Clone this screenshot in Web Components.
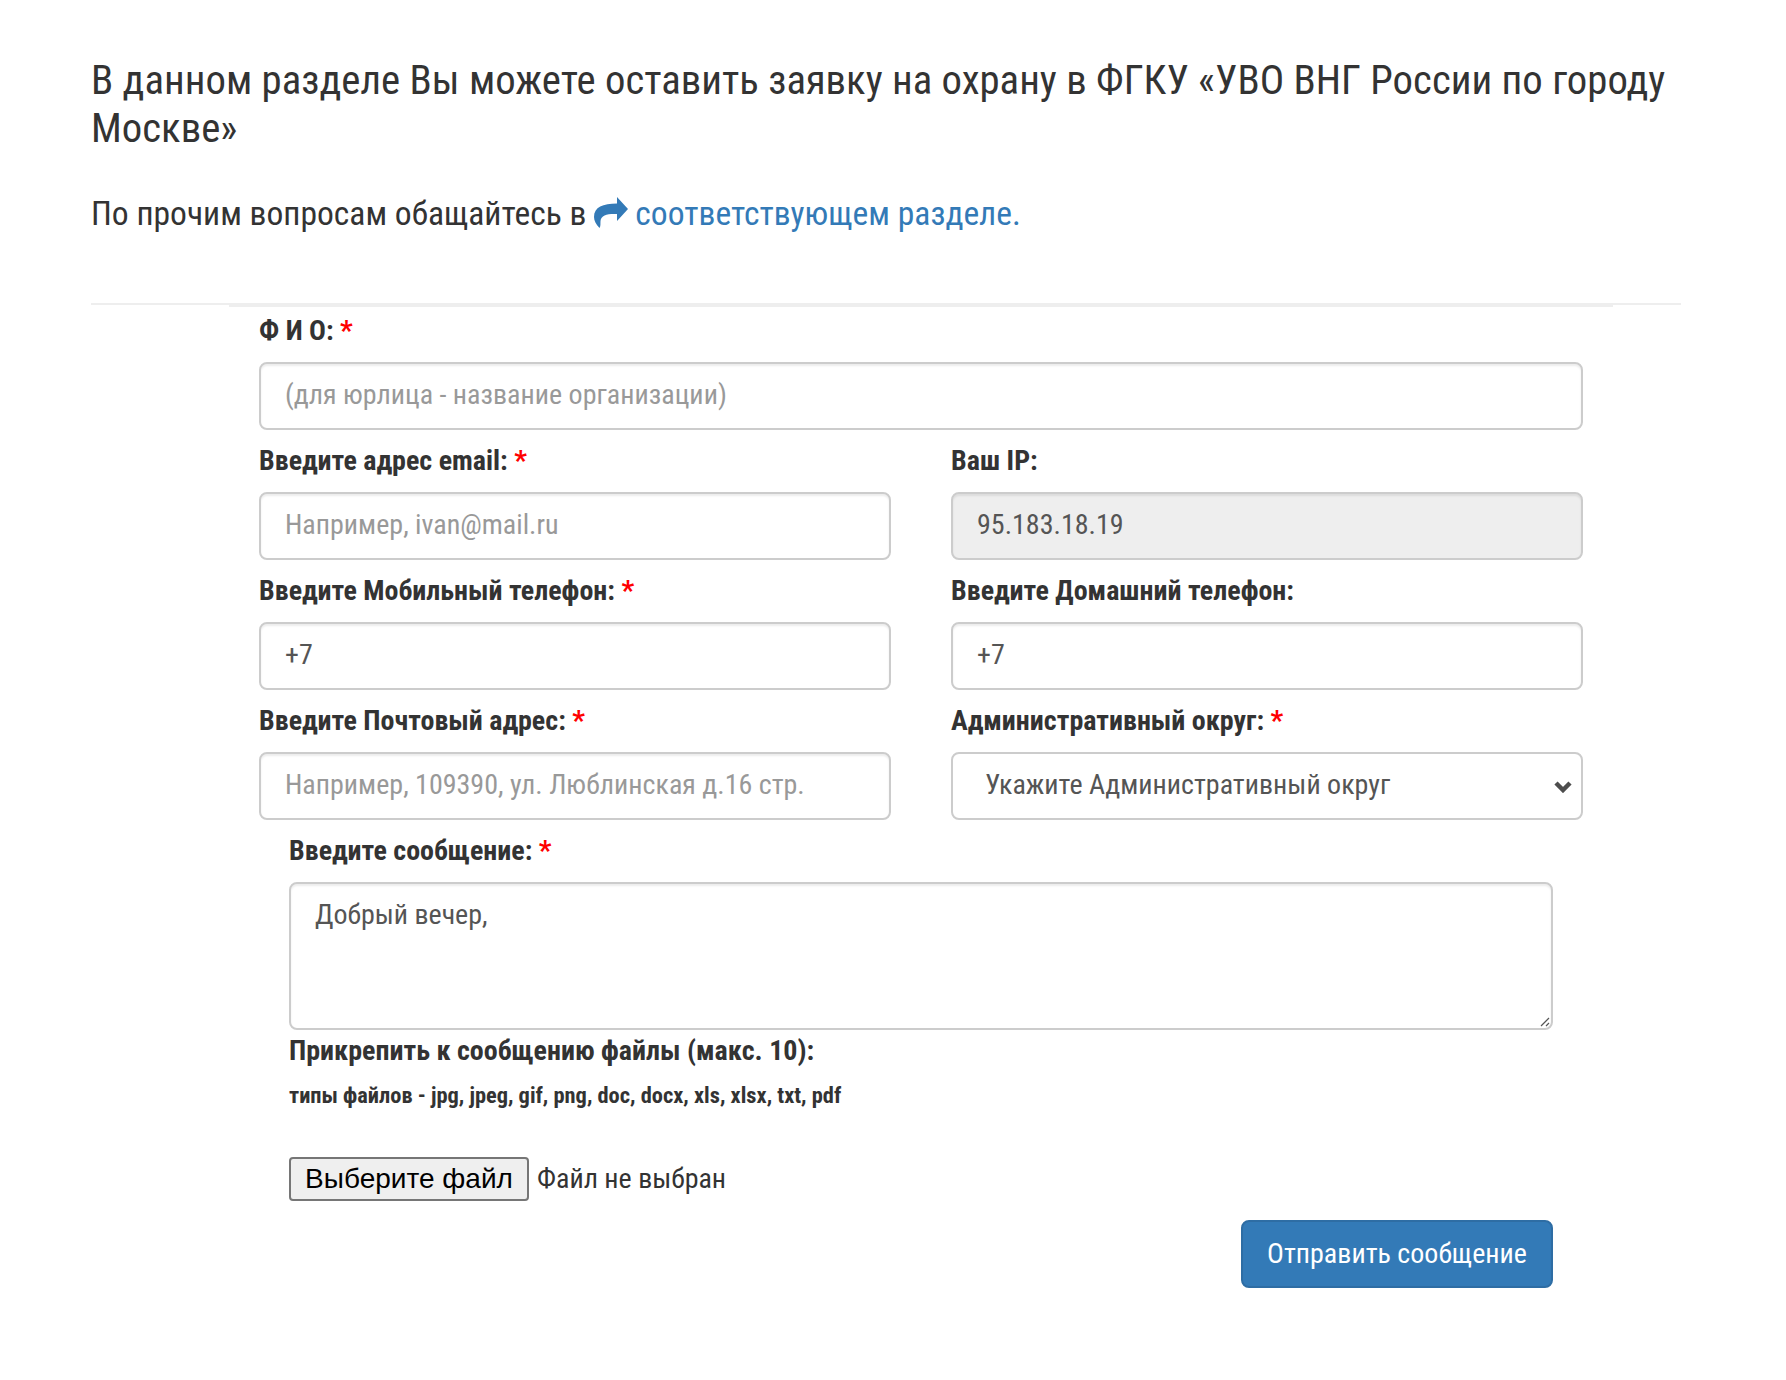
<!DOCTYPE html>
<html lang="ru">
<head>
<meta charset="utf-8">
<title>Заявка на охрану</title>
<style>
  html, body { margin: 0; background: #fff; }
  body { font-family: Roboto, "Liberation Sans", sans-serif; color: #333; }
</style>
</head>
<body>
<request-page>
  <page-intro>
    <span slot="title">В данном разделе Вы можете оставить заявку на охрану в ФГКУ «УВО ВНГ России по городу Москве»</span>
    <span slot="before">По прочим вопросам обащайтесь в</span>
    <span slot="link">соответствующем разделе.</span>
  </page-intro>
  <request-form></request-form>
</request-page>

<script>
class RequestPage extends HTMLElement {
  connectedCallback() {
    this.attachShadow({ mode: 'open' });
    this.shadowRoot.innerHTML = `
      <style>
        :host { display: block; padding: 56px 105px 0 91px; }
      </style>
      <slot></slot>
    `;
  }
}
customElements.define('request-page', RequestPage);

class PageIntro extends HTMLElement {
  connectedCallback() {
    this.attachShadow({ mode: 'open' });
    this.shadowRoot.innerHTML = `
      <style>
        :host { display: block; border-bottom: 2px solid #eee; padding-bottom: 66px; }
        h3 {
          margin: 0 0 39px;
          font: 400 condensed 40.75px/48px Roboto, sans-serif;
          color: #333;
        }
        p {
          margin: 0;
          font: 400 condensed 33.6px/46px Roboto, sans-serif;
          color: #333;
          display: flex;
          align-items: center;
          gap: 8px;
        }
        a { color: #337ab7; text-decoration: none; display: inline-flex; align-items: center; gap: 7px; }
        svg { width: 34px; height: 31px; fill: #337ab7; margin-top: -4px; }
      </style>
      <h3><slot name="title"></slot></h3>
      <p>
        <slot name="before"></slot>
        <a href="#">
          <svg viewBox="0 0 34 31"><path d="M23 0L34 12 23 24V17C14 16.500 7 18 6.500 24 6.300 27 6.800 29 5.500 31 2 27 0 24 0 20 0 10 9 6.500 23 6.500Z"/></svg>
          <slot name="link"></slot>
        </a>
      </p>
    `;
  }
}
customElements.define('page-intro', PageIntro);

class FormField extends HTMLElement {
  connectedCallback() {
    const required = this.hasAttribute('required');
    const kind = this.getAttribute('kind') || 'input';
    const label = this.getAttribute('label');
    const text = this.getAttribute('text') || '';
    this.attachShadow({ mode: 'open' });
    this.shadowRoot.innerHTML = `
      <style>
        :host { display: block; min-width: 0; }
        label {
          display: block;
          box-sizing: border-box;
          height: 41px;
          padding-top: 1px;
          margin-bottom: 11px;
          font: 700 condensed 28px/40px Roboto, sans-serif;
          color: #333;
        }
        label i { color: #f00; font-style: normal; }
        .box {
          box-sizing: border-box;
          height: 68px;
          display: flex;
          align-items: center;
          justify-content: space-between;
          padding: 0 24px 2px;
          border: 2px solid #ccc;
          border-radius: 8px;
          background: #fff;
          box-shadow: inset 0 2px 2px rgba(0, 0, 0, .075);
          font: 400 condensed 28px/40px Roboto, sans-serif;
          color: #555;
          white-space: nowrap;
        }
        :host([placeholder]) .box { color: #999; }
        :host([disabled]) .box { background: #eee; }
        :host([kind=select]) .box { padding: 0 9px 2px 32px; box-shadow: none; }
        :host([kind=area]) .box {
          position: relative;
          height: 148px;
          align-items: flex-start;
          padding-top: 11px;
        }
        .grip { position: absolute; right: 1px; bottom: 1px; width: 10px; height: 10px; }
        .chev { width: 18px; height: 13px; margin-top: 2px; }
      </style>
      <label>${label}${required ? ' <i>*</i>' : ''}</label>
      <div class="box">
        <span>${text}</span>
        ${kind === 'select' ? '<svg class="chev" viewBox="0 0 18 13"><path d="M2 3l7 7 7-7" fill="none" stroke="#4d4d4d" stroke-width="4.500"/></svg>' : ''}
        ${kind === 'area' ? '<svg class="grip" viewBox="0 0 10 10"><path d="M1 9l8-8M6 9l3-3" stroke="#555" stroke-width="1.200"/></svg>' : ''}
      </div>
    `;
  }
}
customElements.define('form-field', FormField);

class FileUpload extends HTMLElement {
  connectedCallback() {
    this.attachShadow({ mode: 'open' });
    this.shadowRoot.innerHTML = `
      <style>
        :host { display: block; padding-top: 1px; }
        h4 { margin: 0; font: 700 condensed 28px/40px Roboto, sans-serif; color: #333; }
        small { display: block; margin-top: 4px; font: 700 condensed 22.400px/40px Roboto, sans-serif; color: #333; }
        .row { display: flex; align-items: center; gap: 8px; margin-top: 42px; }
        button {
          box-sizing: border-box;
          width: 240px;
          height: 44px;
          padding: 0;
          background: #efefef;
          border: 2px solid #767676;
          border-radius: 4px;
          font: 400 28px/40px "Liberation Sans", sans-serif;
          color: #000;
        }
        span { font: 400 condensed 28px/40px Roboto, sans-serif; color: #333; }
      </style>
      <h4>Прикрепить к сообщению файлы (макс. 10):</h4>
      <small>типы файлов - jpg, jpeg, gif, png, doc, docx, xls, xlsx, txt, pdf</small>
      <div class="row">
        <button type="button">Выберите файл</button>
        <span>Файл не выбран</span>
      </div>
    `;
  }
}
customElements.define('file-upload', FileUpload);

class RequestForm extends HTMLElement {
  connectedCallback() {
    this.attachShadow({ mode: 'open' });
    this.shadowRoot.innerHTML = `
      <style>
        :host {
          display: block;
          margin: -1px 68px 0 138px;
          padding: 3px 30px 0;
          border-top: 3px solid #eee;
        }
        .fields { display: grid; grid-template-columns: 1fr 1fr; gap: 10px 60px; }
        .wide { grid-column: 1 / 3; }
        .msg { display: flex; flex-direction: column; padding: 0 30px; margin-top: 10px; }
        .send {
          align-self: flex-end;
          box-sizing: border-box;
          width: 312px;
          height: 68px;
          margin-top: 19px;
          background: #337ab7;
          border: 2px solid #2e6da4;
          border-radius: 8px;
          color: #fff;
          font: 400 condensed 28px/40px Roboto, sans-serif;
        }
      </style>
      <div class="fields">
        <form-field class="wide" label="Ф И О:" required placeholder text="(для юрлица - название организации)"></form-field>
        <form-field label="Введите адрес email:" required placeholder text="Например, ivan@mail.ru"></form-field>
        <form-field label="Ваш IP:" disabled text="95.183.18.19"></form-field>
        <form-field label="Введите Мобильный телефон:" required text="+7"></form-field>
        <form-field label="Введите Домашний телефон:" text="+7"></form-field>
        <form-field label="Введите Почтовый адрес:" required placeholder text="Например, 109390, ул. Люблинская д.16 стр."></form-field>
        <form-field label="Административный округ:" required kind="select" text="Укажите Административный округ"></form-field>
      </div>
      <div class="msg">
        <form-field label="Введите сообщение:" required kind="area" text="Добрый вечер,"></form-field>
        <file-upload></file-upload>
        <button class="send" type="button">Отправить сообщение</button>
      </div>
    `;
  }
}
customElements.define('request-form', RequestForm);
</script>
</body>
</html>
